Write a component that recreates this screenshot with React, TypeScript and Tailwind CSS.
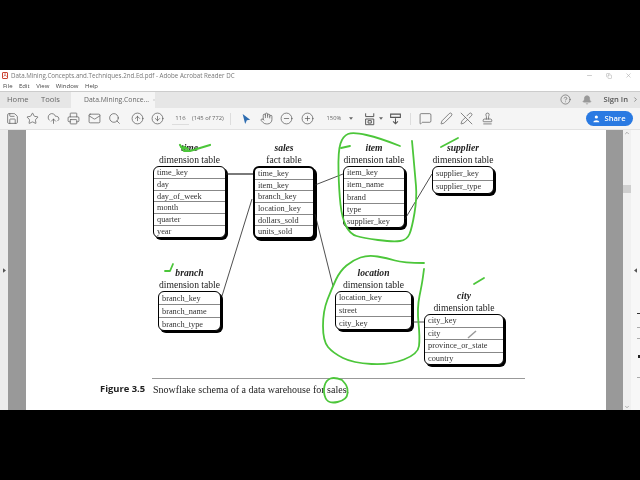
import React from "react";
import {
  Save, Star, CloudUpload, Printer, Mail, Search, CircleArrowUp, CircleArrowDown,
  Hand, CircleMinus, CirclePlus, MessageSquare, Pen, PenOff, Stamp, CircleHelp, Bell,
  ChevronUp, ChevronDown, X, Minus, Copy, ChevronRight,
} from "lucide-react";

const ui = "font-['Open_Sans',sans-serif]";
const serif = "font-['Liberation_Serif',serif]";

function smooth(p: number[][]) {
  let d = `M${p[0][0]} ${p[0][1]}`;
  for (let i = 1; i < p.length - 1; i++) {
    const mx = (p[i][0] + p[i + 1][0]) / 2;
    const my = (p[i][1] + p[i + 1][1]) / 2;
    d += `Q${p[i][0]} ${p[i][1]} ${mx} ${my}`;
  }
  const l = p[p.length - 1];
  return d + `L${l[0]} ${l[1]}`;
}

function Node({ cls, title, sub, rows, w, thick }: { cls: string; title: string; sub: string; rows: string[]; w: string; thick?: boolean }) {
  return (
    <div className={`absolute flex flex-col items-center ${cls} ${serif}`}>
      <div className="h-[12px] leading-[12px] text-[9.6px] italic font-bold text-[#222] whitespace-nowrap">{title}</div>
      <div className="h-[12px] leading-[11px] text-[9.6px] text-[#222] whitespace-nowrap">{sub}</div>
      <div className={`${w} flex-1 min-h-0 flex flex-col rounded-[6px] border-black bg-white shadow-[2px_2px_0_#000] overflow-hidden ${thick ? "border-2" : "border"}`}>
        {rows.map((r, i) => (
          <div key={r} className={`flex-1 min-h-0 flex items-center pl-[3px] text-[8.3px] leading-[9px] text-[#333] whitespace-nowrap ${i ? "border-t border-[#888]" : ""}`}>{r}</div>
        ))}
      </div>
    </div>
  );
}

function Tool({ children }: { children: React.ReactNode }) {
  return <div className="w-[20.5px] flex justify-center shrink-0 text-[#555]">{children}</div>;
}

export default function App() {
  const s = 13;
  const sw = 1.3;
  return (
    <div className={`w-[640px] h-[480px] bg-black flex flex-col overflow-hidden blur-[0.35px] ${ui}`}>
      <div className="h-[70px] shrink-0" />
      {/* title + menu */}
      <div className="h-[21px] shrink-0 bg-white relative flex flex-col text-[#777]">
        <div className="h-[11px] flex items-center pl-[2px] text-[6.2px] whitespace-nowrap">
          <span className="w-[6px] h-[7px] mr-[3px] border border-[#c43] rounded-[1px] text-[#c43] text-[5px] leading-[5px] text-center">A</span>
          <span>Data.Mining.Concepts.and.Techniques.2nd.Ed.pdf - Adobe Acrobat Reader DC</span>
          <div className="ml-auto flex items-center gap-[13px] pr-[8px] text-[#aaa]">
            <Minus size={7} /><Copy size={6} /><X size={7} />
          </div>
        </div>
        <div className="h-[10px] flex items-center pl-[3px] gap-[6.5px] text-[6px] text-[#444]">
          <span>File</span><span>Edit</span><span>View</span><span>Window</span><span>Help</span>
        </div>
      </div>
      {/* tabs */}
      <div className="h-[17px] shrink-0 bg-[#e6e6e6] border-t border-[#ccc] flex items-center text-[7.6px] text-[#666]">
        <div className="w-[41px] pl-[7px]">Home</div>
        <div className="w-[30px]">Tools</div>
        <div className="w-[84px] h-full bg-[#f5f5f5] flex items-center pl-[13px] text-[6.8px] whitespace-nowrap">
          Data.Mining.Conce...<X size={6} className="ml-[4px] text-[#444]" />
        </div>
        <div className="ml-auto flex items-center pr-[1px] text-[#555]">
          <CircleHelp size={11} strokeWidth={1.3} />
          <Bell size={10} fill="#999" className="ml-[11px] text-[#999]" />
          <span className="ml-[12px] font-semibold text-[7.6px] text-[#555]">Sign In</span>
          <ChevronRight size={7} className="ml-[4px]" />
        </div>
      </div>
      {/* toolbar */}
      <div className="h-[22px] shrink-0 bg-[#f5f5f5] border-b border-[#e2e2e2] flex items-center pl-[2px]">
        <Tool><Save size={s} strokeWidth={sw} /></Tool>
        <Tool><Star size={s} strokeWidth={sw} /></Tool>
        <Tool><CloudUpload size={s} strokeWidth={sw} /></Tool>
        <Tool><Printer size={s} strokeWidth={sw} /></Tool>
        <Tool><Mail size={s} strokeWidth={sw} /></Tool>
        <Tool><Search size={s} strokeWidth={sw} /></Tool>
        <div className="ml-[2px] flex">
          <Tool><CircleArrowUp size={s} strokeWidth={sw} /></Tool>
          <Tool><CircleArrowDown size={s} strokeWidth={sw} /></Tool>
        </div>
        <span className="ml-[4px] w-[17px] text-center text-[6px] text-[#666] border-b border-[#ddd] leading-[12px]">116</span>
        <span className="ml-[3px] w-[36px] text-[5.8px] text-[#666] whitespace-nowrap">(145 of 772)</span>
        <div className="ml-[2px] w-px h-[12px] bg-[#ddd]" />
        <svg viewBox="0 0 12 14" className="ml-[10px] w-[10px] h-[12px]"><path d="M2 1 L11 8 L7 8.5 L5 13 Z" fill="#2d6cb0" /></svg>
        <div className="ml-[5px] flex">
          <Tool><Hand size={s} strokeWidth={sw} /></Tool>
          <Tool><CircleMinus size={s} strokeWidth={sw} /></Tool>
          <Tool><CirclePlus size={s} strokeWidth={sw} /></Tool>
        </div>
        <span className="ml-[9px] text-[5.8px] text-[#666] w-[20px]">150%</span>
        <svg viewBox="0 0 6 4" className="w-[4px] h-[3px] ml-[2px]"><path d="M0 0H6L3 4Z" fill="#666" /></svg>
        <svg viewBox="0 0 16 16" className="ml-[11px] w-[13px] h-[14px]" fill="none" stroke="#555" strokeWidth="1.2"><path d="M2 1V5H12V1M2 15V8H12V15Z" /><path d="M5 10H9V13H5Z" /></svg>
        <svg viewBox="0 0 6 4" className="w-[4px] h-[3px] ml-[2px]"><path d="M0 0H6L3 4Z" fill="#666" /></svg>
        <svg viewBox="0 0 16 16" className="ml-[6px] w-[13px] h-[14px]" fill="none" stroke="#555" strokeWidth="1.3"><path d="M2 2H14V6H2ZM8 7V14M5 11L8 14L11 11" /></svg>
        <div className="ml-[8px] w-px h-[12px] bg-[#ddd]" />
        <div className="ml-[5px] flex">
          <Tool><MessageSquare size={s} strokeWidth={sw} /></Tool>
          <Tool><Pen size={s} strokeWidth={sw} /></Tool>
          <Tool><PenOff size={s} strokeWidth={sw} /></Tool>
          <Tool><Stamp size={s} strokeWidth={sw} /></Tool>
        </div>
        <div className="ml-auto mr-[7px] w-[47px] h-[15px] rounded-full bg-[#2a7ae2] flex items-center justify-center gap-[3px] text-white text-[7.6px] font-semibold">
          <svg viewBox="0 0 12 12" className="w-[8px] h-[8px]" fill="white"><circle cx="5" cy="3" r="2.4" /><path d="M0.5 11C0.5 7 9.5 7 9.5 11Z" /></svg>
          Share
        </div>
      </div>
      {/* main */}
      <div className="flex-1 flex min-h-0">
        <div className="w-[8px] shrink-0 bg-[#ececec] flex items-center"><svg viewBox="0 0 4 6" className="w-[3px] h-[5px] ml-[3px]"><path d="M0 0L4 3L0 6Z" fill="#555" /></svg></div>
        <div className="w-[18px] shrink-0 bg-[#999]" />
        <div className="flex-1 bg-white relative overflow-hidden flex flex-col">
          <div className="relative h-[248px] shrink-0">
            <Node cls="left-[127px] top-[12px] h-[96px] w-[73px]" w="w-[73px]" title="time" sub="dimension table" rows={["time_key", "day", "day_of_week", "month", "quarter", "year"]} />
            <Node cls="left-[227px] top-[12px] h-[97px] w-[62px]" w="w-[62px]" thick title="sales" sub="fact table" rows={["time_key", "item_key", "branch_key", "location_key", "dollars_sold", "units_sold"]} />
            <Node cls="left-[317px] top-[12px] h-[86px] w-[62px]" w="w-[62px]" title="item" sub="dimension table" rows={["item_key", "item_name", "brand", "type", "supplier_key"]} />
            <Node cls="left-[406px] top-[12px] h-[52px] w-[62px]" w="w-[62px]" title="supplier" sub="dimension table" rows={["supplier_key", "supplier_type"]} />
            <Node cls="left-[132px] top-[137px] h-[64px] w-[63px]" w="w-[63px]" title="branch" sub="dimension table" rows={["branch_key", "branch_name", "branch_type"]} />
            <Node cls="left-[309px] top-[137px] h-[63px] w-[77px]" w="w-[77px]" title="location" sub="dimension table" rows={["location_key", "street", "city_key"]} />
            <Node cls="left-[398px] top-[160px] h-[75px] w-[80px]" w="w-[80px]" title="city" sub="dimension table" rows={["city_key", "city", "province_or_state", "country"]} />
          </div>
          <div className="ml-[126px] w-[373px] h-px bg-[#999] shrink-0" />
          <div className="ml-[74px] mt-[3px] flex items-center whitespace-nowrap text-[#222]">
            <span className={`w-[53px] text-[9.4px] font-bold ${ui}`}>Figure 3.5</span>
            <span className={`text-[10px] ${serif}`}>Snowflake schema of a data warehouse for sales.</span>
          </div>
          <svg viewBox="0 0 640 480" className="absolute left-[-26px] top-[-129px] w-[640px] h-[480px] pointer-events-none" fill="none">
            <g stroke="#222" strokeWidth="0.8">
              <path d="M226 173H253" strokeWidth="1.2" />
              <path d="M315 184L343 173" />
              <path d="M405 218L432 173" />
              <path d="M222 295L252 198" />
              <path d="M315 213L333 285" />
              <path d="M412 321H424" />
            </g>
            <path d="M468 337L476 330" stroke="#999" strokeWidth="1.5" />
            <g stroke="#4cc63a" strokeWidth="1.8" strokeLinecap="round" strokeLinejoin="round">
              <path d="M180 144L184 150L190 150L200 147L210 144M181 146L188 148L184 146" strokeWidth="2.2" />
              <path d={smooth([[400,145],[380,137],[353,131],[343,135],[338,150],[339,190],[342,217],[350,233],[363,237],[393,241],[407,239],[412,227],[417,197],[415,173],[412,140]])} />
              <path d="M341 147L350 145" />
              <path d="M441 146L458 137" />
              <path d="M165 270L170 270L173 263" />
              <path d={smooth([[424,262],[403,262],[387,257],[368,254],[353,259],[340,270],[332,287],[323,310],[323,340],[333,352],[353,362],[390,364],[418,353],[420,337],[417,307],[422,283],[424,268]])} />
              <path d="M474 283L484 277" />
              <path d={smooth([[342,379],[335,376],[326,379],[323,391],[328,403],[347,399],[348,386],[342,379]])} />
            </g>
          </svg>
        </div>
        <div className="w-[17px] shrink-0 bg-[#999]" />
        <div className="w-[8px] shrink-0 bg-[#f0f0f0] flex flex-col items-center justify-between text-[#666]">
          <ChevronUp size={6} />
          <div className="absolute top-[185px] w-[8px] h-[8px] bg-[#cfcfcf]" />
          <ChevronDown size={6} />
        </div>
        <div className="w-[9px] shrink-0 bg-[#f7f7f7] flex items-center relative">
          <svg viewBox="0 0 4 6" className="w-[3px] h-[5px] ml-[3px]"><path d="M4 0L0 3L4 6Z" fill="#555" /></svg>
          <div className="absolute left-[6px] top-[183px] w-[3px] h-[1px] bg-[#333]" />
          <div className="absolute left-[6px] top-[197px] w-[3px] h-[1px] bg-[#aaa]" />
          <div className="absolute left-[6px] top-[208px] w-[3px] h-[1px] bg-[#aaa]" />
          <div className="absolute left-[7px] top-[225px] w-[2px] h-[3px] bg-[#222]" />
          <div className="absolute left-[6px] top-[247px] w-[3px] h-[1px] bg-[#aaa]" />
        </div>
      </div>
      <div className="h-[70px] shrink-0" />
    </div>
  );
}
